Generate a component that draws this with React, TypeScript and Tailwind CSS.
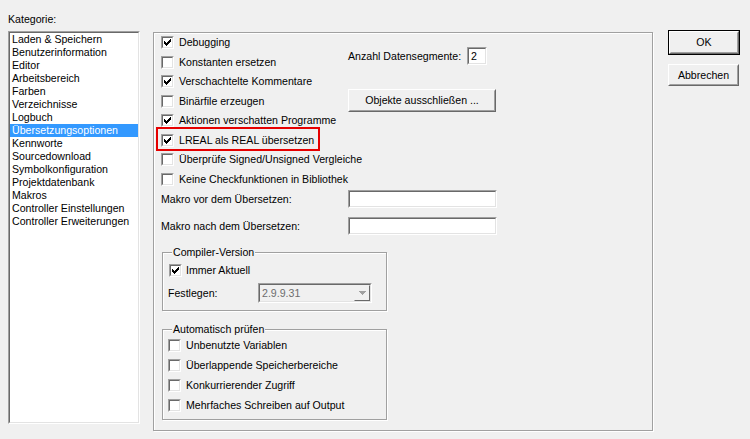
import React from 'react';

// Vertiefter Rahmen im klassischen Windows-Stil
function Sunken({ className = '', inner = '', children }: { className?: string; inner?: string; children?: React.ReactNode }) {
  return (
    <div className={`border border-t-[#a0a0a0] border-l-[#a0a0a0] border-b-white border-r-white ${className}`}>
      <div className={`w-full h-full border border-t-[#696969] border-l-[#696969] border-b-[#e3e3e3] border-r-[#e3e3e3] ${inner}`}>
        {children}
      </div>
    </div>
  );
}

function Check() {
  return (
    <svg width="7" height="7" viewBox="0 0 7 7" shapeRendering="crispEdges" className="block">
      <rect x="6" y="0" width="1" height="1" fill="#000" />
      <rect x="5" y="1" width="2" height="1" fill="#000" />
      <rect x="0" y="2" width="1" height="1" fill="#000" />
      <rect x="4" y="2" width="3" height="1" fill="#000" />
      <rect x="0" y="3" width="2" height="1" fill="#000" />
      <rect x="3" y="3" width="3" height="1" fill="#000" />
      <rect x="0" y="4" width="5" height="1" fill="#000" />
      <rect x="1" y="5" width="3" height="1" fill="#000" />
      <rect x="2" y="6" width="1" height="1" fill="#000" />
    </svg>
  );
}

function Checkbox({ checked = false }: { checked?: boolean }) {
  return (
    <Sunken className="w-[13px] h-[13px] shrink-0" inner="bg-white flex items-center justify-center">
      {checked && <Check />}
    </Sunken>
  );
}

function Raised({ className = '', children, def = false }: { className?: string; children?: React.ReactNode; def?: boolean }) {
  const btn = (
    <div className="w-full h-full border border-t-white border-l-white border-b-[#696969] border-r-[#696969]">
      <div className="w-full h-full border border-t-[#f0f0f0] border-l-[#f0f0f0] border-b-[#a0a0a0] border-r-[#a0a0a0] bg-[#f0f0f0] flex items-center justify-center">
        {children}
      </div>
    </div>
  );
  return def ? <div className={`border border-black ${className}`}>{btn}</div> : <div className={className}>{btn}</div>;
}

const kategorien = [
  'Laden & Speichern',
  'Benutzerinformation',
  'Editor',
  'Arbeitsbereich',
  'Farben',
  'Verzeichnisse',
  'Logbuch',
  'Übersetzungsoptionen',
  'Kennworte',
  'Sourcedownload',
  'Symbolkonfiguration',
  'Projektdatenbank',
  'Makros',
  'Controller Einstellungen',
  'Controller Erweiterungen',
];

const optionen = [
  { label: 'Debugging', checked: true },
  { label: 'Konstanten ersetzen', checked: false },
  { label: 'Verschachtelte Kommentare', checked: true },
  { label: 'Binärfile erzeugen', checked: false },
  { label: 'Aktionen verschatten Programme', checked: true },
  { label: 'LREAL als REAL übersetzen', checked: true, mark: true },
  { label: 'Überprüfe Signed/Unsigned Vergleiche', checked: false },
  { label: 'Keine Checkfunktionen in Bibliothek', checked: false },
];

const pruefungen = [
  'Unbenutzte Variablen',
  'Überlappende Speicherbereiche',
  'Konkurrierender Zugriff',
  'Mehrfaches Schreiben auf Output',
];

export default function App() {
  return (
    <div className="w-[750px] h-[439px] bg-[#f0f0f0] flex text-black text-[10.6px] leading-[13px] font-['Liberation_Sans',Arial,sans-serif] overflow-hidden select-none">
      {/* Kategorie-Liste */}
      <div className="ml-[8px] flex flex-col">
        <div className="mt-[13px] h-[13px]">Kategorie:</div>
        <Sunken className="mt-[5px] w-[132px] h-[393px]" inner="bg-white">
          {kategorien.map((k) => (
            <div
              key={k}
              className={`h-[13px] pl-[2px] whitespace-nowrap ${k === 'Übersetzungsoptionen' ? 'bg-[#3399ff] text-white' : ''}`}
            >
              {k}
            </div>
          ))}
        </Sunken>
      </div>

      {/* Optionen-Panel */}
      <div className="ml-[13px] mt-[32px] w-[500px] h-[399px] border border-[#a0a0a0] shadow-[1px_1px_0_#fff,inset_1px_1px_0_#fff] pl-[7px] flex flex-col">
        <div className="flex">
          <div className="w-[187px] flex flex-col">
            {optionen.map((o) => (
              <div key={o.label} className="relative h-[19.5px] flex items-center gap-[5px] whitespace-nowrap">
                <Checkbox checked={o.checked} />
                <span>{o.label}</span>
                {o.mark && <div className="absolute -top-[4px] -left-[5px] w-[164px] h-[24px] border-2 border-[#e60000]" />}
              </div>
            ))}
          </div>
          <div className="flex flex-col pt-[14px]">
            <div className="h-[18px] flex items-center">
              <span className="w-[119px] whitespace-nowrap">Anzahl Datensegmente:</span>
              <Sunken className="w-[20px] h-[18px]" inner="bg-white pl-[2px] flex items-center">2</Sunken>
            </div>
            <Raised className="mt-[24px] w-[148px] h-[23px]">Objekte ausschließen ...</Raised>
          </div>
        </div>

        <div className="mt-[1px] h-[18px] flex items-center">
          <span className="w-[187px]">Makro vor dem Übersetzen:</span>
          <Sunken className="w-[149px] h-[18px]" inner="bg-white" />
        </div>
        <div className="mt-[9px] h-[18px] flex items-center">
          <span className="w-[187px]">Makro nach dem Übersetzen:</span>
          <Sunken className="w-[149px] h-[18px]" inner="bg-white" />
        </div>

        {/* Compiler-Version */}
        <div className="relative mt-[17px] ml-[1px] w-[225px] h-[59px] border border-[#a0a0a0] shadow-[1px_1px_0_#fff,inset_1px_1px_0_#fff] pt-[11px]">
          <span className="absolute -top-[7px] left-[9px] px-[1px] bg-[#f0f0f0]">Compiler-Version</span>
          <div className="h-[13px] pl-[6px] flex items-center gap-[4px]">
            <Checkbox checked />
            <span>Immer Aktuell</span>
          </div>
          <div className="mt-[6px] h-[20px] pl-[5px] flex items-center">
            <span className="w-[90px]">Festlegen:</span>
            <Sunken className="w-[114px] h-[20px]" inner="bg-[#f0f0f0] flex items-center">
              <span className="flex-1 pl-[2px] text-[#6d6d6d]">2.9.9.31</span>
              <div className="w-[16px] h-full border border-t-[#f0f0f0] border-l-[#f0f0f0] border-b-[#696969] border-r-[#696969] bg-[#f0f0f0] flex items-center justify-center">
                <svg width="7" height="4" viewBox="0 0 7 4" shapeRendering="crispEdges">
                  <polygon points="0,0 7,0 3.5,4" fill="#a0a0a0" />
                </svg>
              </div>
            </Sunken>
          </div>
        </div>

        {/* Automatisch prüfen */}
        <div className="relative mt-[18px] ml-[1px] w-[225px] h-[91px] border border-[#a0a0a0] shadow-[1px_1px_0_#fff,inset_1px_1px_0_#fff] pt-[5px]">
          <span className="absolute -top-[7px] left-[9px] px-[1px] bg-[#f0f0f0]">Automatisch prüfen</span>
          {pruefungen.map((p) => (
            <div key={p} className="h-[20px] pl-[5px] flex items-center gap-[5px] whitespace-nowrap">
              <Checkbox />
              <span>{p}</span>
            </div>
          ))}
        </div>
      </div>

      {/* Buttons */}
      <div className="ml-[15px] mt-[30px] flex flex-col">
        <Raised def className="w-[72px] h-[25px]">OK</Raised>
        <Raised className="mt-[9px] w-[71px] h-[22px]">Abbrechen</Raised>
      </div>
    </div>
  );
}
